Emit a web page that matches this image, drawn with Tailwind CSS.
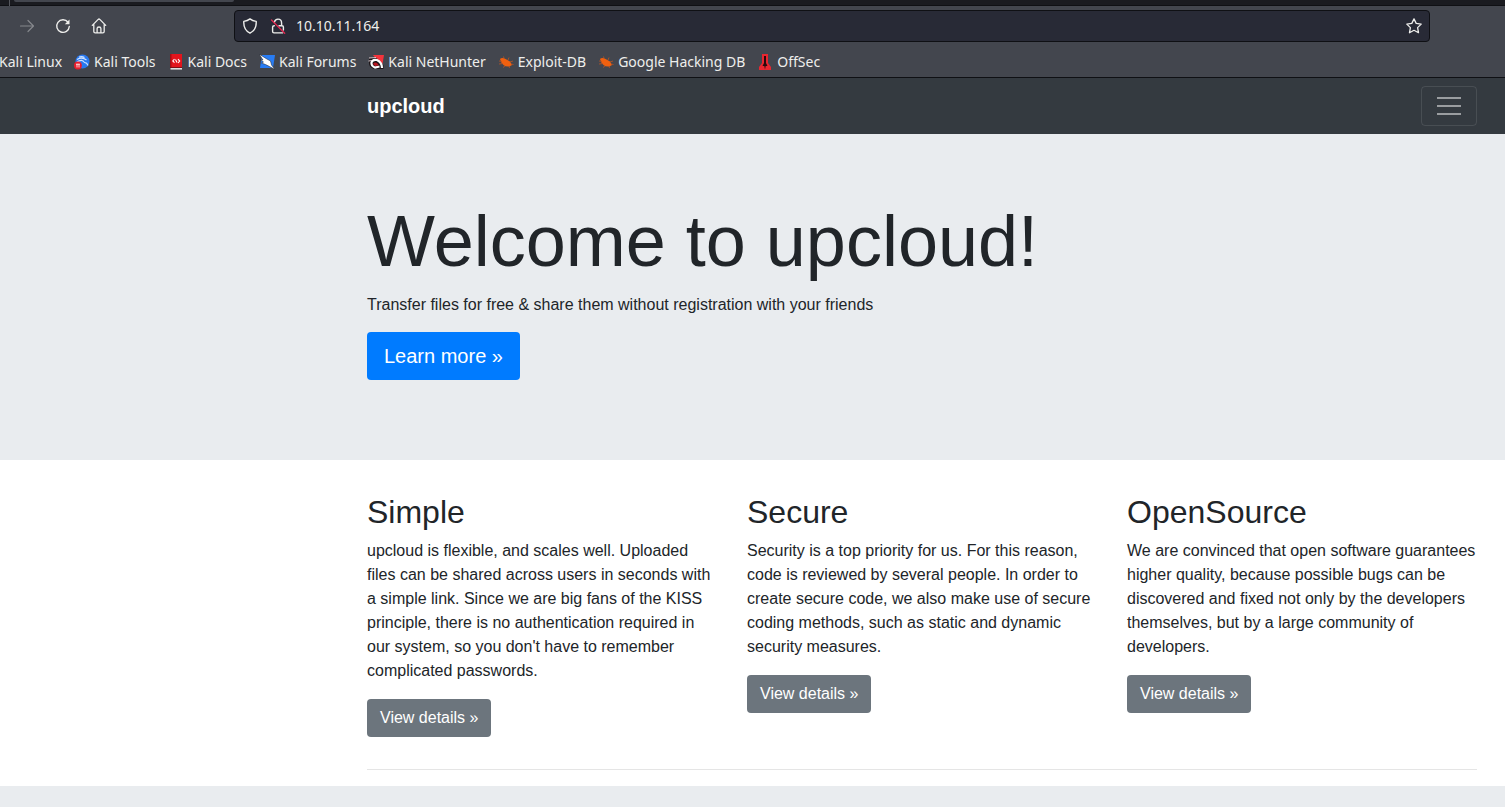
<!DOCTYPE html>
<html lang="en">
<head>
<meta charset="utf-8">
<meta name="viewport" content="width=device-width, initial-scale=1">
<title>upcloud</title>
<script src="https://cdn.jsdelivr.net/npm/@tailwindcss/browser@4"></script>
</head>
<body class="min-h-screen flex flex-col overflow-x-hidden bg-white text-[#212529] font-['Liberation_Sans',Arial,sans-serif]">

<!-- Browser chrome -->
<div class="bg-[#43464e] border-b border-[#0f1014] text-[#eeeeec] font-['Noto_Sans',sans-serif]">
  <div class="h-1.5 bg-[#1a1b20] border-b border-[#0f1014] flex items-start">
    <div class="w-2.5 h-1.5 border-r border-[#55575d]"></div>
    <div class="ml-1 w-[220px] h-0.5 rounded-b bg-[#43464e]"></div>
  </div>
  <div class="h-10 flex items-center pl-[19px] pr-[75px]">
    <div class="flex items-center gap-5 w-[215px]">
      <button aria-label="Forward" class="text-[#85878c]"><svg class="size-4" viewBox="0 0 16 16" fill="none" stroke="currentColor" stroke-width="1.2" stroke-linecap="round" stroke-linejoin="round"><path d="M1.5 8h13M9 2.5 14.5 8 9 13.500"/></svg></button>
      <button aria-label="Reload"><svg class="size-4" viewBox="0 0 16 16" fill="none" stroke="currentColor" stroke-width="1.4" stroke-linecap="round"><path d="M13 4.200A6.300 6.300 0 1 0 14.300 8.500"/><path d="M14.500 1.500v4.700H9.800z" fill="currentColor" stroke="none"/></svg></button>
      <button aria-label="Home"><svg class="size-4" viewBox="0 0 16 16" fill="none" stroke="currentColor" stroke-width="1.3" stroke-linecap="round" stroke-linejoin="round"><path d="M1.300 7.400 7.200 1.400Q8 .700 8.800 1.400L14.700 7.400M2.800 6.200V13.500Q2.800 14.900 4.200 14.900H11.800Q13.200 14.900 13.200 13.500V6.200M6.100 14.800V10.600Q6.100 9 8 9T9.900 10.600V14.800"/></svg></button>
    </div>
    <div class="flex-1 h-8 flex items-center gap-3 pl-[7px] pr-[7px] rounded bg-[#282a36] border border-[#0f1014]">
      <svg class="size-4 shrink-0" viewBox="0 0 16 16" fill="none" stroke="currentColor" stroke-width="1.4" stroke-linejoin="round"><path d="M8 .900C9.700 2.200 11.800 3 14.200 3.400 14.500 8.500 12.600 13 8 15.200 3.400 13 1.500 8.500 1.800 3.400 4.200 3 6.300 2.200 8 .900Z"/></svg>
      <svg class="size-4 shrink-0" viewBox="0 0 16 16" fill="none" stroke="currentColor" stroke-width="1.4" stroke-linecap="round"><path d="M4.400 4.200C4.800 2.200 6.100 1.100 8 1.100c2.300 0 3.600 1.600 3.600 3.800V7.500M9 7.700H12Q13.400 7.700 13.400 9.100V12M4.300 7.700Q2.600 7.700 2.600 9.100V13.500Q2.600 14.900 4 14.900H12.500"/><path d="M1.500 2 14.700 15.200" stroke="#e22850" stroke-width="1.3"/></svg>
      <input aria-label="Address" value="10.10.11.164" class="flex-1 min-w-0 -ml-0.5 bg-transparent outline-none text-sm leading-5">
      <button aria-label="Bookmark this page"><svg class="size-4" viewBox="0 0 16 16" fill="none" stroke="currentColor" stroke-width="1.3" stroke-linejoin="round"><path d="M8 .900 10.200 5.400 15.200 6.100 11.600 9.600 12.500 14.700 8 12.300 3.500 14.700 4.400 9.600 .800 6.100 5.800 5.400Z"/></svg></button>
    </div>
  </div>
  <nav aria-label="Bookmarks" class="h-[31px] flex items-center gap-3 text-sm leading-5 whitespace-nowrap -ml-px">
    <a href="#">Kali Linux</a>
    <a href="#" class="flex items-center gap-1"><svg class="size-4" viewBox="0 0 16 16"><circle cx="8.500" cy="7.500" r="7" fill="#2878ef"/><path d="M3 5.500Q8 2.500 12.500 6M3 8Q8 4.500 10.500 8.500 13 8.500 14 11.500M5 3Q8 2 10.500 3.500" fill="none" stroke="#cfe2ff" stroke-width="1.100"/><circle cx="3.900" cy="11.500" r="3.900" fill="#e81c2c"/><path d="M2 10.200H5.900M3 10v3.500M5 10v3.500" stroke="#fff" stroke-width=".8"/></svg>Kali Tools</a>
    <a href="#" class="flex items-center gap-1"><svg class="size-4" viewBox="0 0 16 16"><path d="M2 0H14V13H2z" fill="#e3141c"/><path d="M2 0h1.500v13H2z" fill="#a70d13"/><path d="M2 13h12v1H2z" fill="#7c1015"/><path d="M2.500 14H14v1.600H2.500z" fill="#dedede"/><path d="M6.500 5 4.800 7l1.700 1.700M10 5.200 11.700 7 10 9M7.500 5.500 9 8.500" fill="none" stroke="#fff" stroke-width="1.100"/></svg>Kali Docs</a>
    <a href="#" class="flex items-center gap-1"><svg class="size-4" viewBox="0 0 16 16"><path d="M3 1H16L14 14H1z" fill="#287cf4"/><path d="M0 0 7 4.500 11.500 7 12.500 11 16 15.500 10.500 12.500 6.500 10.500 2.500 9 4.500 8 1 5.500 4 6z" fill="#fff" stroke="#151a24" stroke-width=".5"/></svg>Kali Forums</a>
    <a href="#" class="flex items-center gap-1"><svg class="size-4" viewBox="0 0 16 16"><path d="M5 1H16L14.500 10 9 6z" fill="#f4343c"/><path d="M1 4.500Q5 2 9 4.500L15.500 11V15H6Q1 13.500 1 9z" fill="#1c1518"/><path d="M14 14Q14 8.500 9 6 4.500 5 3.500 8.500 3 12 7 13.500L11.500 12.500" fill="none" stroke="#fff" stroke-width="2.200"/><path d="M5 10Q7 7.500 9.500 9.500L11 11.500 7 12z" fill="#b81822"/><path d="M1 4 8 3.500M.5 7 4 6.500" stroke="#e8d5d8" stroke-width=".9"/></svg>Kali NetHunter</a>
    <a href="#" class="flex items-center gap-1"><svg class="size-4" viewBox="0 0 16 16"><path d="M2 5Q4 3 8 5.300L12 7.500 14 11 11.500 12.500Q7.500 13 5.500 11 3 9 2 5z" fill="#f0600f"/><path d="M1 7l3 .5M1 10l4-.5M6 4.500 5.500 2.500M10 6l1-2.500M12 8l3-1M13 10l2.500.5M7 12l-2 1.500M11 12l.5 2" stroke="#b75425" stroke-width=".8"/></svg>Exploit-DB</a>
    <a href="#" class="flex items-center gap-1"><svg class="size-4" viewBox="0 0 16 16"><path d="M2 5Q4 3 8 5.300L12 7.500 14 11 11.500 12.500Q7.500 13 5.500 11 3 9 2 5z" fill="#f0600f"/><path d="M1 7l3 .5M1 10l4-.5M6 4.500 5.500 2.500M10 6l1-2.500M12 8l3-1M13 10l2.500.5M7 12l-2 1.500M11 12l.5 2" stroke="#b75425" stroke-width=".8"/></svg>Google Hacking DB</a>
    <a href="#" class="flex items-center gap-1"><svg class="size-4" viewBox="0 0 16 16"><path d="M5 0H11V9L14 13V16H2V13L5 9z" fill="#e82630"/><path d="M7 2H9V9L10.500 12 8.700 12 8 15.500 7.300 12H5.500L7 9z" fill="#29090c"/></svg>OffSec</a>
  </nav>
</div>

<!-- Site header -->
<header class="h-14 flex items-center justify-between bg-[#343a40] pl-[367px] pr-7">
  <a href="#" class="text-xl leading-[30px] font-bold text-white">upcloud</a>
  <button aria-label="Toggle navigation" class="w-14 h-10 flex items-center justify-center rounded border border-white/10 text-white/50">
    <svg class="size-[30px]" viewBox="0 0 30 30" stroke="currentColor" stroke-width="2"><path d="M3 7h24M3 15h24M3 23h24"/></svg>
  </button>
</header>

<main>
  <section class="bg-[#e9ecef] pl-[367px] pr-7 pt-16 pb-20">
    <h1 class="text-7xl leading-[87px] mb-2">Welcome to upcloud!</h1>
    <p class="mb-[15px]">Transfer files for free &amp; share them without registration with your friends</p>
    <a href="#" class="inline-block align-top rounded bg-[#007bff] px-[17px] py-[9px] text-xl leading-[30px] text-white">Learn more »</a>
  </section>

  <div class="pl-[367px] pr-7 pt-[33px] pb-4">
    <div class="grid grid-cols-3 gap-[30px] pb-8 border-b border-black/10">
      <section>
        <h2 class="text-[32px] leading-[38px] mb-2">Simple</h2>
        <p class="mb-4">upcloud is flexible, and scales well. Uploaded files can be shared across users in seconds with a simple link. Since we are big fans of the KISS principle, there is no authentication required in our system, so you don't have to remember complicated passwords.</p>
        <a href="#" class="inline-block align-top rounded bg-[#6c757d] px-[13px] py-[7px] text-white">View details »</a>
      </section>
      <section>
        <h2 class="text-[32px] leading-[38px] mb-2">Secure</h2>
        <p class="mb-4">Security is a top priority for us. For this reason, code is reviewed by several people. In order to create secure code, we also make use of secure coding methods, such as static and dynamic security measures.</p>
        <a href="#" class="inline-block align-top rounded bg-[#6c757d] px-[13px] py-[7px] text-white">View details »</a>
      </section>
      <section>
        <h2 class="text-[32px] leading-[38px] mb-2">OpenSource</h2>
        <p class="mb-4">We are convinced that open software guarantees higher quality, because possible bugs can be discovered and fixed not only by the developers themselves, but by a large community of developers.</p>
        <a href="#" class="inline-block align-top rounded bg-[#6c757d] px-[13px] py-[7px] text-white">View details »</a>
      </section>
    </div>
  </div>
</main>
<footer class="flex-1 bg-[#e9ecef]"></footer>
</body>
</html>
